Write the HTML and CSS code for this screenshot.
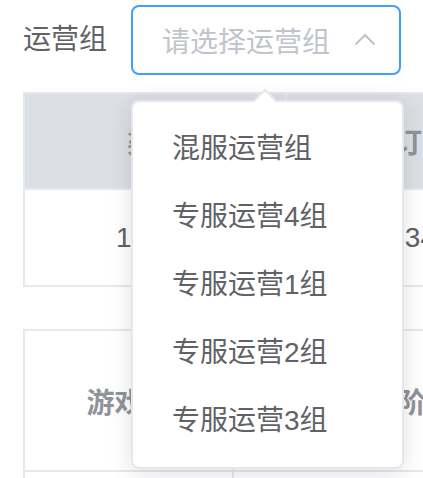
FILE: index.html
```html
<!DOCTYPE html>
<html lang="zh-CN">
<head>
  <meta charset="UTF-8">
  <meta name="viewport" content="width=device-width, initial-scale=1.0">
  <title>运营组筛选</title>
  <link rel="stylesheet" href="styles.css">
</head>
<body>
  <div class="page">
    <div class="filter">
      <label class="filter-label">运营组</label>
      <div class="select">
        <div class="select-input">
          <span class="placeholder">请选择运营组</span>
          <svg class="chevron" width="22" height="13" viewBox="0 0 22 13">
            <polyline points="1.5,11.5 11,2 20.5,11.5" fill="none" stroke="#c0c4cc" stroke-width="2.2"/>
          </svg>
        </div>
        <div class="dropdown">
          <div class="dropdown-arrow"></div>
          <ul class="options">
            <li>混服运营组</li>
            <li>专服运营4组</li>
            <li>专服运营1组</li>
            <li>专服运营2组</li>
            <li>专服运营3组</li>
          </ul>
        </div>
      </div>
    </div>

    <table class="grid grid-summary">
      <colgroup><col class="c1"><col class="c2"><col class="c2"></colgroup>
      <thead>
        <tr><th>渠道</th><th>订单量</th><th>金额</th></tr>
      </thead>
      <tbody>
        <tr><td>12345</td><td>3456</td><td>0</td></tr>
      </tbody>
    </table>

    <table class="grid grid-detail">
      <colgroup><col class="d1"><col class="d2"><col class="d2"></colgroup>
      <thead>
        <tr><th>游戏ID</th><th>所属阶段</th><th>区服</th></tr>
      </thead>
      <tbody>
        <tr><td></td><td></td><td></td></tr>
      </tbody>
    </table>
  </div>
</body>
</html>
```

FILE: styles.css
```css
html, body {
  margin: 0;
  overflow: hidden;
}
body {
  font-family: "Liberation Sans", "Noto Sans CJK SC", sans-serif;
  font-size: 28px;
  color: #606266;
  background-color: #fff;
}
.page {
  padding: 5px 0 0 23px;
}
.filter {
  display: flex;
  align-items: center;
  gap: 24px;
  height: 70px;
}
.filter-label {
  line-height: 70px;
}
.select {
  position: relative;
  width: 270px;
}
.select-input {
  box-sizing: border-box;
  height: 70px;
  border: 2px solid #409eff;
  border-radius: 8px;
  display: flex;
  align-items: center;
  justify-content: space-between;
  padding: 0 23px 0 29px;
}
.placeholder {
  color: #c0c4cc;
}
.chevron {
  display: block;
  margin-top: -2px;
}
.dropdown {
  position: absolute;
  z-index: 10;
  left: 0;
  top: 95px;
  box-sizing: border-box;
  width: 273px;
  background-color: #fff;
  border: 2px solid #e4e7ed;
  border-radius: 8px;
  box-shadow: 0 4px 24px rgba(0, 0, 0, 0.12);
  padding: 13px 0 12px;
}
.dropdown-arrow {
  position: absolute;
  top: -10px;
  left: 124px;
  width: 16px;
  height: 16px;
  background-color: #fff;
  border-top: 2px solid #e4e7ed;
  border-left: 2px solid #e4e7ed;
  box-sizing: border-box;
  transform: rotate(45deg);
}
.options {
  list-style: none;
  margin: 0;
  padding: 0;
}
.options li {
  height: 68px;
  line-height: 68px;
  padding: 0 39px;
  white-space: nowrap;
}
.grid {
  border-collapse: collapse;
  table-layout: fixed;
  width: 860px;
}
.grid th, .grid td {
  border: 2px solid #e6e8ee;
  text-align: center;
  padding: 0;
  white-space: nowrap;
  overflow: hidden;
}
.grid th {
  font-weight: bold;
  color: #909399;
}
.grid-summary {
  margin-top: 17px;
}
.grid-summary .c1 { width: 262px; }
.grid-summary .c2 { width: 300px; }
.grid-summary th {
  height: 94px;
  background-color: #dcdfe6;
}
.grid-summary td {
  height: 95px;
}
.grid-detail {
  margin-top: 42px;
}
.grid-detail .d1 { width: 209px; }
.grid-detail .d2 { width: 330px; }
.grid-detail th {
  height: 139px;
  background-color: #fff;
}
.grid-detail td {
  height: 60px;
}
```
